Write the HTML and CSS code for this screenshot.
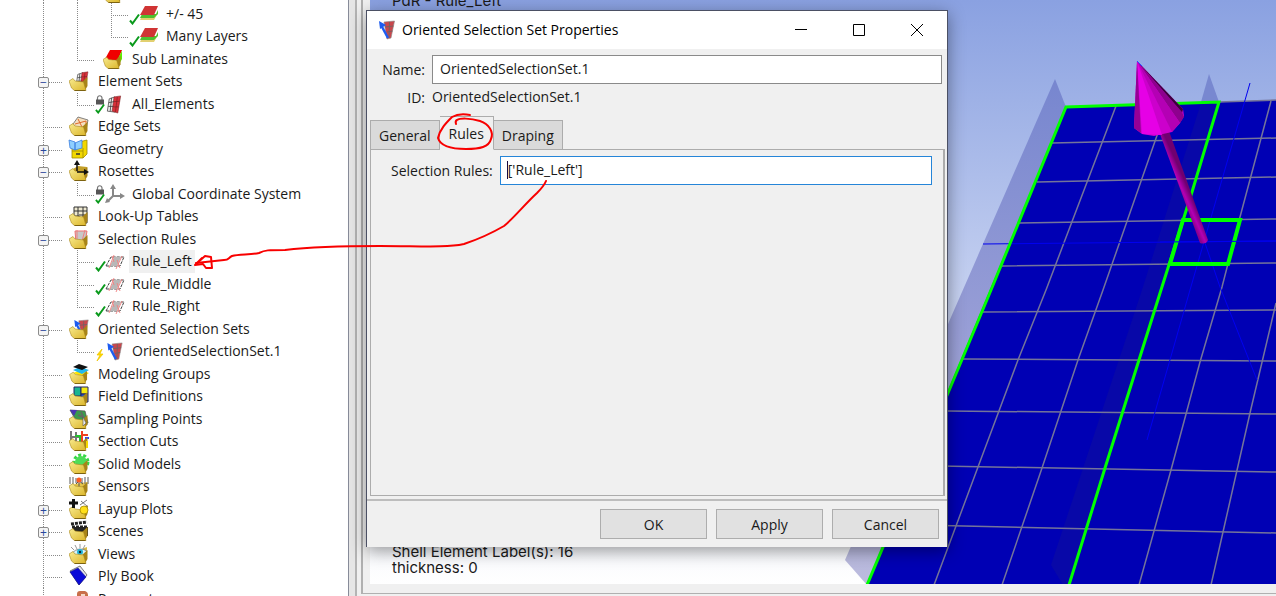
FILE: index.html
```html
<!DOCTYPE html>
<html lang="en">
<head>
    <meta charset="UTF-8">
    <meta name="viewport" content="width=device-width, initial-scale=1.0">
    <title>Oriented Selection Set Properties</title>
    <link rel="stylesheet" href="styles.css">
</head>
<body>

    <!-- shared icon parts -->
    <svg class="defs" aria-hidden="true">
        <defs>
            <linearGradient id="gold" x1="0" y1="0" x2="1" y2="1">
                <stop offset="0" stop-color="#f8eb90"/>
                <stop offset="1" stop-color="#dcb62a"/>
            </linearGradient>
            <symbol id="folder" viewBox="0 0 20 20">
                <path d="M13 11L18.500 6V15L16 19.500Z" fill="#a88418"/>
                <path d="M0 10L4 7.500L6 10L14.500 11L17 19.500H5.500L2.500 17Z" fill="url(#gold)" stroke="#a8861c" stroke-width=".6"/>
                <path d="M5.500 19.500H16.500" stroke="#7c6210" stroke-width="1"/>
            </symbol>
            <symbol id="check" viewBox="0 0 11 12">
                <path d="M1 7.500L3.500 10.500L10 1.500" fill="none" stroke="#0a9a1c" stroke-width="2"/>
            </symbol>
            <symbol id="lock" viewBox="0 0 10 10">
                <path d="M2.500 5V3a2.200 2.200 0 0 1 4.500 0V5" fill="none" stroke="#777" stroke-width="1.200"/>
                <path d="M1 4.500H9V9.500H1Z" fill="#555"/>
            </symbol>
            <symbol id="ply" viewBox="0 0 20 14">
                <path d="M1 14L3 10H17L19 7L15 14Z" fill="#e2d070"/>
                <path d="M1 12L3 8H17L19 4V8L15 12Z" fill="#4fc02e"/>
                <path d="M1 9L6 0H19L15 9Z" fill="#d03434"/>
            </symbol>
            <symbol id="mesh" viewBox="0 0 16 20">
                <path d="M3 4L9 2V18L1 17Z" fill="#eee" stroke="#444" stroke-width=".8"/>
                <path d="M8 2L15 1L12 19L6 17Z" fill="#d8303a" stroke="#7a2828" stroke-width=".6"/>
                <path d="M2.500 8L8 7M2 12L7.500 12M5.500 3L4 17" fill="none" stroke="#333" stroke-width=".8"/>
                <path d="M8 7L14 6.500M7.500 12.500L13 12.500M11.500 2L9.500 18" fill="none" stroke="#7c2020" stroke-width=".7"/>
            </symbol>
            <symbol id="oss" viewBox="0 0 16 20">
                <path d="M5 2L15.500 1L12 18L8 19Z" fill="#c9474c" stroke="#888" stroke-width=".6"/>
                <path d="M6 7L14.500 6M8 12L13.500 11M10.500 2L10 18" fill="none" stroke="#666" stroke-width=".8"/>
                <path d="M2 5L9 18" stroke="#1d5cf0" stroke-width="2.500"/>
                <path d="M0 1L7 5L1 9Z" fill="#1d5cf0"/>
            </symbol>
            <symbol id="rule" viewBox="0 0 20 14">
                <path d="M1 11L6 2H19L15 11Z" fill="none" stroke="#444" stroke-dasharray="3 1"/>
                <path d="M5 11L9 2H16L12 11Z" fill="#b8b8b8"/>
                <path d="M4 13L9 0M11 14L17 1M7 1L9 7M12 5L15 13" fill="none" stroke="#f08080" stroke-width=".9"/>
            </symbol>
            <symbol id="bolt" viewBox="0 0 8 12">
                <path d="M6 0L1 6H4L1 12L7 5H4Z" fill="#ffd900" stroke="#f0c800" stroke-width=".8"/>
            </symbol>
        </defs>
    </svg>

    <div id="workspace">

        <div id="sidebar">
            <ul class="tree">
                <li class="level3 through">
                    <span class="twig"></span>
                    <svg class="icon wide" viewBox="0 0 32 20"><use href="#folder" width="20" height="20" y="2"/></svg>
                </li>
                <li class="level3 mid">
                    <span class="twig"></span>
                    <svg class="icon wide" viewBox="0 0 32 20"><use href="#check" x="1" y="9" width="11" height="12"/><use href="#ply" x="11" y="2" width="20" height="14"/></svg>
                    <span class="label">+/- 45</span>
                </li>
                <li class="level3">
                    <span class="twig"></span>
                    <svg class="icon wide" viewBox="0 0 32 20"><use href="#check" x="1" y="9" width="11" height="12"/><use href="#ply" x="11" y="2" width="20" height="14"/></svg>
                    <span class="label">Many Layers</span>
                </li>
                <li class="level2">
                    <span class="twig"></span>
                    <svg class="icon wide" viewBox="0 0 32 20"><path d="M11 10L16 1H28L24 11H14Z" fill="#f00000"/><path d="M23 11L28 2V10L24 17Z" fill="#5bf000"/><use href="#folder" x="9" y="1" width="19" height="19"/></svg>
                    <span class="label">Sub Laminates</span>
                </li>
                <li class="level1">
                    <span class="twig"><button class="toggle" aria-label="Collapse Element Sets">−</button></span>
                    <svg class="icon" viewBox="0 0 20 20"><use href="#mesh" x="6" y="0" width="14" height="17"/><use href="#folder"/></svg>
                    <span class="label">Element Sets</span>
                </li>
                <li class="level2">
                    <span class="twig"></span>
                    <svg class="icon wide" viewBox="0 0 32 20"><use href="#lock" x="1" y="1" width="10" height="10"/><use href="#check" x="1" y="9" width="10" height="11"/><use href="#mesh" x="12" y="1" width="16" height="19"/></svg>
                    <span class="label">All_Elements</span>
                </li>
                <li class="level1">
                    <span class="twig"></span>
                    <svg class="icon" viewBox="0 0 20 20"><path d="M4 8L9 1L19 4L17 14H8Z" fill="#f3dfc0" stroke="#666" stroke-width=".8"/><path d="M6 8L17 5M9 3L13 11M17 5V13" stroke="#e06a2a" fill="none"/><use href="#folder"/></svg>
                    <span class="label">Edge Sets</span>
                </li>
                <li class="level1">
                    <span class="twig"><button class="toggle" aria-label="Expand Geometry">+</button></span>
                    <svg class="icon" viewBox="0 0 20 20"><path d="M3 9L14 2L18 1V15L14 19H3Z" fill="#f2d800" stroke="#a08c00" stroke-width=".8"/><path d="M14 9V19M3 12H14" stroke="#a08c00" stroke-width=".8"/><path d="M7 15H11" stroke="#333" stroke-width="1.500"/><path d="M0 1L6 3V11L1 9ZM6 4L13 1V9L6 11Z" fill="#8fd0ff" stroke="#3a7fe0" stroke-width=".8"/></svg>
                    <span class="label">Geometry</span>
                </li>
                <li class="level1">
                    <span class="twig"><button class="toggle" aria-label="Collapse Rosettes">−</button></span>
                    <svg class="icon" viewBox="0 0 20 20"><path d="M4 8L9 5L18 6V14H6Z" fill="#c39f28"/><use href="#folder"/><path d="M8 10V2M8 11H18" stroke="#111" stroke-width="1.500" fill="none"/><path d="M8 -1L11 4H5ZM20 11L15 8V14Z" fill="#111"/></svg>
                    <span class="label">Rosettes</span>
                </li>
                <li class="level2">
                    <span class="twig"></span>
                    <svg class="icon wide" viewBox="0 0 32 20"><use href="#lock" x="1" y="1" width="10" height="10"/><use href="#check" x="1" y="9" width="10" height="11"/><path d="M19 12V4M19 12H28M19 12L14 17" stroke="#888" stroke-width="2" fill="none"/><path d="M19 0L22 5H16ZM31 12L26 9V15ZM11 19L13 14L16 18Z" fill="#888"/></svg>
                    <span class="label">Global Coordinate System</span>
                </li>
                <li class="level1">
                    <span class="twig"></span>
                    <svg class="icon" viewBox="0 0 20 20"><path d="M5 1H18V17H10V10H5Z" fill="#eee9d0" stroke="#333"/><path d="M5 5H18M10 9H18M12 13H18M9 1V10M14 1V17" stroke="#333" fill="none"/><use href="#folder"/></svg>
                    <span class="label">Look-Up Tables</span>
                </li>
                <li class="level1">
                    <span class="twig"><button class="toggle" aria-label="Collapse Selection Rules">−</button></span>
                    <svg class="icon" viewBox="0 0 20 20"><path d="M6 2H18L16 14H7Z" fill="#c8c8c8" stroke="#ef7070"/><path d="M8 1V10M16 1L13 12" stroke="#ef8080"/><use href="#folder"/></svg>
                    <span class="label">Selection Rules</span>
                </li>
                <li class="level2 mid">
                    <span class="twig"></span>
                    <svg class="icon wide" viewBox="0 0 32 20"><use href="#check" x="1" y="9" width="11" height="12"/><use href="#rule" x="11" y="4" width="20" height="14"/></svg>
                    <span class="label selected">Rule_Left</span>
                </li>
                <li class="level2 mid">
                    <span class="twig"></span>
                    <svg class="icon wide" viewBox="0 0 32 20"><use href="#check" x="1" y="9" width="11" height="12"/><use href="#rule" x="11" y="4" width="20" height="14"/></svg>
                    <span class="label">Rule_Middle</span>
                </li>
                <li class="level2">
                    <span class="twig"></span>
                    <svg class="icon wide" viewBox="0 0 32 20"><use href="#check" x="1" y="9" width="11" height="12"/><use href="#rule" x="11" y="4" width="20" height="14"/></svg>
                    <span class="label">Rule_Right</span>
                </li>
                <li class="level1">
                    <span class="twig"><button class="toggle" aria-label="Collapse Oriented Selection Sets">−</button></span>
                    <svg class="icon" viewBox="0 0 20 20"><use href="#oss" x="5" y="0" width="15" height="18"/><use href="#folder"/></svg>
                    <span class="label">Oriented Selection Sets</span>
                </li>
                <li class="level2">
                    <span class="twig"></span>
                    <svg class="icon wide" viewBox="0 0 32 20"><use href="#bolt" x="2" y="8" width="8" height="12"/><use href="#oss" x="13" y="1" width="16" height="19"/></svg>
                    <span class="label">OrientedSelectionSet.1</span>
                </li>
                <li class="level1">
                    <span class="twig"></span>
                    <svg class="icon" viewBox="0 0 20 20"><path d="M4 9L12 6L20 9L14 13Z" fill="#ffe600"/><path d="M4 6L11 3L20 6L13 10Z" fill="#21b8f0"/><path d="M4 3L10 0L19 3L13 6Z" fill="#111"/><use href="#folder" y="1" width="20" height="19"/></svg>
                    <span class="label">Modeling Groups</span>
                </li>
                <li class="level1">
                    <span class="twig"></span>
                    <svg class="icon" viewBox="0 0 20 20"><path d="M5 1H12V10H5Z" fill="#19b590" stroke="#226"/><path d="M12 1H19V8H12Z" fill="#f4ea10" stroke="#226"/><path d="M12 8H19V16H12Z" fill="#2457c8" stroke="#226"/><use href="#folder"/></svg>
                    <span class="label">Field Definitions</span>
                </li>
                <li class="level1">
                    <span class="twig"></span>
                    <svg class="icon" viewBox="0 0 20 20"><path d="M1 1L16 2L19 14L13 15L5 8Z" fill="#3b9b4c" stroke="#555" stroke-width=".8"/><path d="M1 1H8L5 7Z" fill="#4a35b0"/><path d="M12 3L18 16M9 6L16 9" stroke="#666" stroke-width="1.500"/><use href="#folder"/><path d="M14 8V17L17 14Z" fill="#eee" stroke="#555" stroke-width=".6"/></svg>
                    <span class="label">Sampling Points</span>
                </li>
                <li class="level1">
                    <span class="twig"></span>
                    <svg class="icon" viewBox="0 0 20 20"><path d="M2 0V10M7 1V10M2 6H10" stroke="#777" stroke-width="2"/><path d="M6 5H11V11" stroke="#25c030" stroke-width="2" fill="none"/><path d="M13 0V12M13 4H19" stroke="#f04020" stroke-width="2"/><path d="M16 7H20M17 7V17" stroke="#2a40ff" stroke-width="2"/><use href="#folder"/><path d="M18 10V17" stroke="#f5d800" stroke-width="2"/></svg>
                    <span class="label">Section Cuts</span>
                </li>
                <li class="level1">
                    <span class="twig"></span>
                    <svg class="icon" viewBox="0 0 20 20"><circle cx="12" cy="8" r="7" fill="none" stroke="#35d845" stroke-width="3" stroke-dasharray="3 2"/><circle cx="12" cy="8" r="6" fill="#4ddc58"/><use href="#folder"/></svg>
                    <span class="label">Solid Models</span>
                </li>
                <li class="level1">
                    <span class="twig"></span>
                    <svg class="icon" viewBox="0 0 20 20"><path d="M5 8L18 6V14H8Z" fill="#e3c44a"/><path d="M1 1V8M4 1V8M7 2V7M13 2V7M16 1V8M19 1V8" stroke="#777" stroke-width="1.200"/><path d="M10 4V11M7 8L10 5L14 8" stroke="#555" fill="none"/><circle cx="10" cy="4" r="2.500" fill="#ff5a1e"/><use href="#folder"/></svg>
                    <span class="label">Sensors</span>
                </li>
                <li class="level1">
                    <span class="twig"><button class="toggle" aria-label="Expand Layup Plots">+</button></span>
                    <svg class="icon" viewBox="0 0 20 20"><path d="M11 6L18 1M12 2L19 8" stroke="#777"/><use href="#folder"/><circle cx="15" cy="11" r="4" fill="#ffdf18" stroke="#a78a00" stroke-width=".8"/><path d="M0 4H9M4.500 0V9" stroke="#111" stroke-width="3"/></svg>
                    <span class="label">Layup Plots</span>
                </li>
                <li class="level1">
                    <span class="twig"><button class="toggle" aria-label="Expand Scenes">+</button></span>
                    <svg class="icon" viewBox="0 0 20 20"><path d="M4 6H19V15H4Z" fill="#222"/><path d="M2 3L18 1M3 6H19" stroke="#222" stroke-width="3" stroke-dasharray="3 1"/><use href="#folder"/></svg>
                    <span class="label">Scenes</span>
                </li>
                <li class="level1">
                    <span class="twig"></span>
                    <svg class="icon" viewBox="0 0 20 20"><path d="M10 6L18 3V14H10Z" fill="#d9bb45"/><path d="M2 3L5 6M6 1L8 5M11 0V4M16 1L14 5" stroke="#999"/><path d="M3 9Q10 2 18 7L15 12H8Z" fill="#d9f3f8" stroke="#777" stroke-width=".8"/><circle cx="11" cy="8" r="3" fill="#22b5d8"/><circle cx="11" cy="8" r="1.200" fill="#123"/><use href="#folder"/></svg>
                    <span class="label">Views</span>
                </li>
                <li class="level1">
                    <span class="twig"></span>
                    <svg class="icon" viewBox="0 0 20 20"><path d="M1 5L11 0L18 9L10 19Z" fill="#e4e4ee" stroke="#777"/><path d="M1 6L9 2L17 11L10 19Z" fill="#0a0ad8" stroke="#10108a" stroke-width=".6"/></svg>
                    <span class="label">Ply Book</span>
                </li>
                <li class="level1">
                    <span class="twig"></span>
                    <svg class="icon" viewBox="0 0 20 20"><path d="M8 14V5Q8 2 11 2H16Q19 3 19 6V15Z" fill="#c96f4a"/><path d="M12 5H16V8H12Z" fill="#f3d9c8"/><use href="#folder"/></svg>
                    <span class="label">Parameters</span>
                </li>
            </ul>
        </div>

        <div id="splitter"></div>

        <div id="viewport">
            <div class="canvas">
                <svg class="scene" viewBox="370 0 906 585" preserveAspectRatio="xMaxYMin slice" aria-hidden="true">
                    <defs>
                        <linearGradient id="shade" x1="0" y1="0" x2="0" y2="1">
                            <stop offset="0" stop-color="#7786cf"/>
                            <stop offset=".5" stop-color="#989ed6"/>
                            <stop offset="1" stop-color="#bcbcde"/>
                        </linearGradient>
                        <linearGradient id="rod" gradientUnits="userSpaceOnUse" x1="1178" y1="190" x2="1187" y2="186">
                            <stop offset="0" stop-color="#8c008c"/>
                            <stop offset=".4" stop-color="#b400b4"/>
                            <stop offset="1" stop-color="#700070"/>
                        </linearGradient>
                    </defs>
                    <path d="M1055 79L1066 107L867 585L845 560Z" fill="url(#shade)"/>
                    <path d="M1209 74L1219 102H1201Z" fill="#7888d0"/>
                    <path d="M1066 107L1219 102L1276 100V585H867Z" fill="#0000b4"/>
                    <path d="M1201 103L1219 102L1069 585H1063L1051 565L1142 290Z" fill="#0808a8"/>
                    <g class="grid">
                        <path d="M1219 102L1276 100M1052 143L1276 138M1037 182L1276 177M1019 223L1276 219M1002 266L1276 263M982 312L1276 310M962 359L1276 361M948 411L1276 414M940 466L1276 472M920 525L1276 533"/>
                        <path d="M1116 106L1046 290L1018 360L978 467L934 585M1168 104L1103 290L1078 360L1042 468L1002 585M1271 101L1240 217L1222 287L1200 362L1171 470L1139 585M1276 303L1250 413L1223 532L1211 585"/>
                    </g>
                    <path class="axis" d="M983 244L1276 241M1250 83L1190 290L1147 440M1205 243L1220 287L1257 380"/>
                    <path class="edge" d="M867 585L948 393L991 290L1066 107L1219 102L1192 192L1161 290L1105 468L1069 585"/>
                    <path d="M1183 220H1240L1228 264H1170Z" fill="none" stroke="#00ff00" stroke-width="4"/>
                    <path class="axis" d="M1160 242L1276 241"/>
                    <path d="M1160 134L1169 131L1208 240Q1206 245 1200 243Z" fill="url(#rod)"/>
                    <!-- arrow head -->
                    <path d="M1137 61L1183 109L1184 116L1180 123L1172 132L1154 136L1142 134L1134 128Z" fill="#cc00cc"/>
                    <path d="M1137 61L1183 109L1182 113Z" fill="#3c003c"/>
                    <path d="M1137 61L1182 112L1184 117L1180 123Z" fill="#8e008e"/>
                    <path d="M1137 61L1180 123L1172 132Z" fill="#b400b4"/>
                    <path d="M1137 61L1162 135L1142 134Z" fill="#e600e6"/>
                    <path d="M1137 61L1141 133L1134 128Z" fill="#960096"/>
                    <path d="M1137 61L1142 66" stroke="#2a4cff"/>
                </svg>
                <p class="info top">PdR - Rule_Left</p>
                <p class="info">Shell Element Label(s): 16<br>thickness: 0</p>
            </div>
        </div>
    </div>

    <form id="dialog" onsubmit="return false">
        <div class="titlebar">
            <svg class="icon" viewBox="0 0 16 20"><use href="#oss" width="16" height="20"/></svg>
            <h1>Oriented Selection Set Properties</h1>
            <button type="button" aria-label="Minimize"><svg viewBox="0 0 12 12"><path d="M0 5.500H12"/></svg></button>
            <button type="button" aria-label="Maximize"><svg viewBox="0 0 12 12"><path d="M.5 .5H11.500V11.500H.5Z"/></svg></button>
            <button type="button" aria-label="Close"><svg viewBox="0 0 12 12"><path d="M0 0L12 12M12 0L0 12"/></svg></button>
        </div>

        <div class="fields">
            <label for="name">Name:</label>
            <input type="text" id="name" value="OrientedSelectionSet.1">
            <label for="setId">ID:</label>
            <output id="setId">OrientedSelectionSet.1</output>
        </div>

        <div class="tabs" role="tablist">
            <button type="button" role="tab">General</button>
            <button type="button" role="tab" class="active" aria-selected="true">Rules</button>
            <button type="button" role="tab">Draping</button>
        </div>
        <div class="panel" role="tabpanel">
            <label for="rules">Selection Rules:</label>
            <div class="inputWrap">
                <input type="text" id="rules" value="['Rule_Left']">
                <span class="caret"></span>
            </div>
        </div>

        <div class="actions">
            <button type="submit">OK</button>
            <button type="button">Apply</button>
            <button type="button">Cancel</button>
        </div>
    </form>

    <!-- red pen marks -->
    <svg id="markup" viewBox="0 0 600 300" aria-hidden="true">
        <path d="M470 115Q459 113 452 117C446 123 440 129 438 138C440 145 450 149 466 149C480 149 489 147 491 139C494 132 489 124 480 121C470 118 460 118 457 120Q455 121 456 124"/>
        <path d="M546 181C544 186 541 189 537 193C525 204 514 218 504 226C492 233 476 240 464 244C445 248 420 246 380 246C340 246 310 247 285 250C268 250 265 250 259 253C250 255 239 254 232 256C228 258 229 260 224 260L196 263"/>
        <path d="M195 265L205 256L211 257L212 268L206 268L203 264L195 265L202 258"/>
    </svg>

</body>
</html>
```
FILE: styles.css
```css
*{
    margin: 0;
    padding: 0;
    box-sizing: border-box;
}
body{
    background-color: #f0f0f0;
    font-family: "Open Sans", "Noto Sans", sans-serif;
    font-size: 14px;
    color: #1a1a1a;
    overflow: hidden;
}
button, input{
    font: inherit;
    color: inherit;
}
.defs{
    position: absolute;
    width: 0;
    height: 0;
}
#workspace{
    display: flex;
    height: 100vh;
}

/* tree */
#sidebar{
    flex: none;
    width: 348px;
    background-color: #fff;
    overflow: hidden;
}
.tree{
    list-style: none;
    margin-top: -20px;
    --dots: linear-gradient(#8a8a8a 50%, transparent 50%);
}
.tree li{
    display: flex;
    height: 22px;
    padding-left: 43px;
    background: var(--dots) 43px 0 / 1px 2px repeat-y;
}
.tree li:nth-child(odd){
    height: 23px;
}
.tree .level2{
    padding-left: 77px;
}
.tree .level2.mid{
    background: var(--dots) 43px 0 / 1px 2px repeat-y, var(--dots) 77px 0 / 1px 2px repeat-y;
}
.tree .level3{
    padding-left: 111px;
    background: var(--dots) 43px 0 / 1px 2px repeat-y, var(--dots) 77px 0 / 1px 2px repeat-y;
}
.tree .level3.mid{
    background: var(--dots) 43px 0 / 1px 2px repeat-y, var(--dots) 77px 0 / 1px 2px repeat-y, var(--dots) 111px 0 / 1px 2px repeat-y;
}
.tree .through{
    padding-left: 86px;
}
.twig{
    position: relative;
    flex: none;
    width: 19px;
    height: 13px;
    border-bottom: 1px dotted #8a8a8a;
}
.level2 .twig, .level3 .twig{
    width: 17px;
    border-left: 1px dotted #8a8a8a;
}
.through .twig{
    visibility: hidden;
}
.toggle{
    position: absolute;
    left: -5px;
    top: 7px;
    width: 11px;
    height: 11px;
    border: 1px solid #8c8c8c;
    border-radius: 2px;
    background-color: #f4f4f4;
    color: #28479b;
    font-size: 12px;
    line-height: 9px;
    text-align: center;
}
.tree .icon{
    flex: none;
    width: 20px;
    height: 20px;
    margin: 1px 0 0 7px;
    overflow: visible;
}
.tree .icon.wide{
    width: 32px;
    margin-left: 0;
}
.label{
    padding: 0 3px;
    margin-left: 3px;
    line-height: 22px;
    white-space: nowrap;
}
.level1 .label{
    margin-left: 6px;
}
.selected{
    background-color: #f0f0f0;
}

/* 3d view */
#splitter{
    flex: none;
    width: 9px;
    border-left: 1px solid #878b99;
    border-right: 2px solid #b4b4b4;
    background-color: #e6e6e6;
}
#viewport{
    flex: 1;
    margin: 0 0 2px 4px;
    padding: 0 0 9px 7px;
    border-left: 2px solid #b0b0b0;
    border-bottom: 1px solid #b0b0b0;
}
.canvas{
    height: 100%;
    position: relative;
    display: flex;
    flex-direction: column;
    justify-content: space-between;
    padding-left: 22px;
    overflow: hidden;
    background: linear-gradient(#8aa1e1, #fff);
}
.scene{
    position: absolute;
    left: 0;
    top: 0;
    width: 100%;
    height: 100%;
}
.grid{
    fill: none;
    stroke: #74749a;
    stroke-width: 1.5;
}
.axis{
    fill: none;
    stroke: #0000f0;
}
.edge{
    fill: none;
    stroke: #00ff00;
    stroke-width: 3;
}
.info{
    position: relative;
    font-family: Inter, sans-serif;
    font-size: 15px;
    line-height: 16px;
    padding-bottom: 8px;
}
.info.top{
    margin-top: -7px;
}

/* dialog */
#dialog{
    position: absolute;
    left: 366px;
    top: 10px;
    width: 582px;
    height: 537px;
    display: flex;
    flex-direction: column;
    background-color: #f0f0f0;
    border: 1px solid #4b5064;
    border-bottom: 0;
    box-shadow: 0 4px 16px rgba(0, 0, 0, 0.4);
}
.titlebar{
    display: flex;
    align-items: center;
    height: 38px;
    padding: 0 1px 0 12px;
    background-color: #fff;
}
.titlebar .icon{
    width: 16px;
    height: 20px;
}
.titlebar h1{
    flex: 1;
    margin-left: 7px;
    font-size: 14px;
    line-height: 18px;
    font-weight: 400;
    color: #000;
}
.titlebar button{
    width: 58px;
    height: 38px;
    border: 0;
    background: none;
    display: flex;
    align-items: center;
    justify-content: center;
}
.titlebar button svg{
    width: 12px;
    height: 12px;
    fill: none;
    stroke: #000;
}
.fields{
    display: grid;
    grid-template-columns: 58px 1fr;
    column-gap: 7px;
    align-items: center;
    padding: 6px 5px 0 0;
}
.fields label{
    text-align: right;
}
.fields output{
    line-height: 26px;
}
input{
    width: 100%;
    height: 29px;
    padding: 0 7px 2px;
    border: 1px solid #8a8a8a;
    background-color: #fff;
    outline: none;
}
.tabs{
    display: flex;
    align-items: flex-end;
    margin: 6px 0 -1px 3px;
    height: 34px;
}
.tabs button{
    position: relative;
    height: 30px;
    padding: 0 8px;
    border: 1px solid #acacac;
    background-color: #dadada;
}
.tabs button + button{
    border-left: 0;
}
.tabs .active{
    height: 34px;
    padding: 0 9px;
    background-color: #f0f0f0;
    border-bottom-color: #f0f0f0;
}
.panel{
    flex: 1;
    display: flex;
    align-items: flex-start;
    gap: 7px;
    margin: 0 2px 3px 3px;
    padding: 6px 11px 0 20px;
    border: 1px solid #acacac;
    border-right-width: 2px;
}
.panel label{
    line-height: 29px;
}
.inputWrap{
    position: relative;
    flex: 1;
}
.inputWrap input{
    border-color: #2585d8;
}
.caret{
    position: absolute;
    left: 7px;
    top: 5px;
    width: 1px;
    height: 18px;
    background-color: #1a0a40;
}
.actions{
    display: flex;
    justify-content: flex-end;
    gap: 9px;
    padding: 8px 8px 8px 0;
    border-top: 2px solid #bdbdbd;
}
.actions button{
    width: 107px;
    height: 30px;
    border: 1px solid #adadad;
    background-color: #e1e1e1;
}

#markup{
    position: absolute;
    left: 0;
    top: 0;
    width: 600px;
    height: 300px;
    fill: none;
    stroke: #f80000;
    stroke-width: 2;
    stroke-linecap: round;
    stroke-linejoin: round;
    pointer-events: none;
}
```
